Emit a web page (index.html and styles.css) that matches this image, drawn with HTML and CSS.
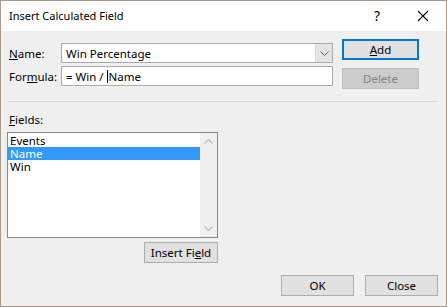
FILE: index.html
```html
<!DOCTYPE html>
<html lang="en">
<head>
    <meta charset="UTF-8">
    <title>Insert Calculated Field</title>
    <link rel="stylesheet" href="styles.css">
</head>
<body>

    <div class="dialog">
        <div class="titlebar">
            <span class="title">Insert Calculated Field</span>
            <span class="help">?</span>
            <svg class="close" width="12" height="12" viewBox="0 0 12 12">
                <path d="M1 1 L11 11 M11 1 L1 11" stroke="#000" stroke-width="1.1" fill="none"/>
            </svg>
        </div>

        <div class="content">
            <div class="top">
                <div class="form">
                    <div class="row">
                        <label><u>N</u>ame:</label>
                        <div class="combo">
                            <span class="value">Win Percentage</span>
                            <span class="drop">
                                <svg width="9" height="5" viewBox="0 0 9 5">
                                    <path d="M0.5 0.5 L4.5 4.5 L8.5 0.5" stroke="#606060" fill="none"/>
                                </svg>
                            </span>
                        </div>
                    </div>
                    <div class="row">
                        <label>For<u>m</u>ula:</label>
                        <div class="input">= Win /&nbsp;<span class="caret"></span>Name</div>
                    </div>
                </div>
                <div class="side">
                    <button class="btn default"><u>A</u>dd</button>
                    <button class="btn" disabled>Delete</button>
                </div>
            </div>

            <div class="sep"></div>

            <div class="fields-label"><u>F</u>ields:</div>
            <div class="list">
                <ul class="items">
                    <li>Events</li>
                    <li class="selected">Name</li>
                    <li>Win</li>
                </ul>
                <div class="scroll">
                    <svg width="9" height="5" viewBox="0 0 9 5">
                        <path d="M0.5 4.5 L4.5 0.5 L8.5 4.5" stroke="#c2c2c2" stroke-width="1.4" fill="none"/>
                    </svg>
                    <svg width="9" height="5" viewBox="0 0 9 5">
                        <path d="M0.5 0.5 L4.5 4.5 L8.5 0.5" stroke="#c2c2c2" stroke-width="1.4" fill="none"/>
                    </svg>
                </div>
            </div>
            <div class="insert-row">
                <button class="btn insert">Insert Fi<u>e</u>ld</button>
            </div>

            <div class="footer">
                <button class="btn">OK</button>
                <button class="btn">Close</button>
            </div>
        </div>
    </div>

</body>
</html>
```

FILE: styles.css
```css
body {
    margin: 0;
    font-family: "Noto Sans", "DejaVu Sans", sans-serif;
    font-size: 11.5px;
    color: #000;
}
.dialog {
    width: 447px;
    height: 307px;
    box-sizing: border-box;
    border: 1px solid #a99a8b;
    background: #f0f0f0;
}
.titlebar {
    height: 30px;
    background: #fff;
    display: flex;
    align-items: center;
    padding-left: 8px;
}
.title {
    flex: 1;
    font-size: 11px;
    margin-top: -1px;
}
.help {
    font-size: 14px;
    margin-right: 37px;
    margin-top: -2px;
}
.close {
    margin-right: 17px;
}
.content {
    padding: 8px 0 0 6px;
}
.top {
    display: flex;
    align-items: flex-start;
}
.form {
    margin-top: 4px;
    display: flex;
    flex-direction: column;
    gap: 3px;
}
.row {
    display: flex;
    align-items: center;
    height: 20px;
}
.row label {
    width: 52px;
    padding-left: 2px;
}
.combo, .input {
    width: 272px;
    height: 20px;
    box-sizing: border-box;
    border: 1px solid #acacac;
    background: #fff;
    display: flex;
    align-items: center;
    padding-left: 4px;
}
.combo .value {
    flex: 1;
}
.drop {
    width: 16px;
    height: 18px;
    background: #e5e5e5;
    border-left: 1px solid #dcdcdc;
    display: flex;
    align-items: center;
    justify-content: center;
}
.caret {
    display: inline-block;
    width: 1px;
    height: 13px;
    background: #000;
    margin-right: 1px;
}
.side {
    margin-left: 9px;
    display: flex;
    flex-direction: column;
    gap: 8px;
}
.btn {
    width: 77px;
    height: 21px;
    box-sizing: border-box;
    background: #e1e1e1;
    border: 1px solid #adadad;
    font-family: inherit;
    font-size: 11.5px;
    color: #000;
    padding: 0;
    line-height: 17px;
}
.btn.default {
    border: 2px solid #0078d7;
}
.btn:disabled {
    background: #cccccc;
    border-color: #bfbfbf;
    color: #838383;
}
.sep {
    width: 431px;
    border-top: 1px solid #dadada;
    margin-top: 12px;
}
.fields-label {
    margin-top: 10px;
    padding-left: 2px;
    line-height: 16px;
}
.list {
    margin-top: 4px;
    width: 211px;
    height: 106px;
    box-sizing: border-box;
    border: 1px solid #828790;
    background: #fff;
    display: flex;
}
.items {
    flex: 1;
    list-style: none;
    margin: 0;
    padding: 1px 0 0 0;
}
.items li {
    line-height: 13px;
    height: 13px;
    padding-left: 2px;
    overflow: hidden;
}
.items li.selected {
    background: #3399ff;
    color: #fff;
}
.scroll {
    width: 17px;
    background: #f0f0f0;
    display: flex;
    flex-direction: column;
    justify-content: space-between;
    align-items: center;
    padding: 6px 0 6px 0;
}
.insert-row {
    width: 211px;
    display: flex;
    justify-content: flex-end;
    margin-top: 4px;
}
.btn.insert {
    width: 74px;
}
.footer {
    display: flex;
    justify-content: flex-end;
    gap: 11px;
    margin-top: 12px;
    padding-right: 8px;
}
.footer .btn {
    width: 73px;
}
```
